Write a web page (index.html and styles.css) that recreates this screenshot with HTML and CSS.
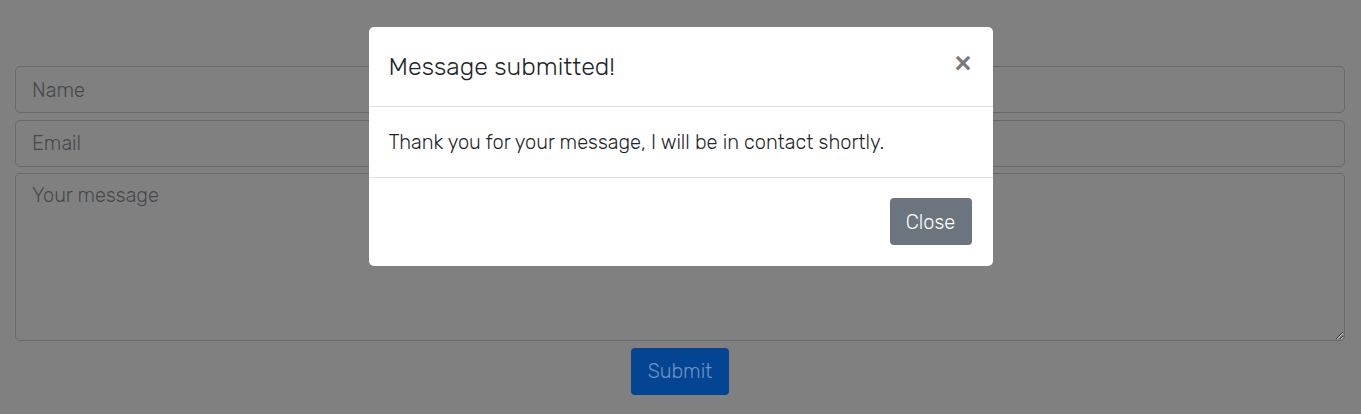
FILE: index.html
```html
<!DOCTYPE html>
<html lang="en">
<head>
<meta charset="utf-8">
<title>Contact</title>
<link rel="stylesheet" href="styles.css">
</head>
<body>
<main class="page">
  <form class="contact-form">
    <input class="field" type="text" placeholder="Name">
    <input class="field" type="email" placeholder="Email">
    <textarea class="field field-area" placeholder="Your message"></textarea>
    <div class="actions">
      <button type="button" class="btn btn-submit">Submit</button>
    </div>
  </form>
</main>
<div class="backdrop">
  <div class="modal">
    <div class="modal-header">
      <h5 class="modal-title">Message submitted!</h5>
      <span class="modal-close">&times;</span>
    </div>
    <div class="modal-body">Thank you for your message, I will be in contact shortly.</div>
    <div class="modal-footer">
      <button type="button" class="btn btn-close">Close</button>
    </div>
  </div>
</div>
</body>
</html>
```
FILE: styles.css
```css
* { box-sizing: border-box; }
html, body { margin: 0; height: 100%; }
body {
  background: #808080;
  font-family: Rubik, Roboto, "Noto Sans", sans-serif;
  font-weight: 300;
  overflow: hidden;
}
.page {
  padding: 66px 16px 0 15px;
}
.contact-form {
  display: flex;
  flex-direction: column;
  gap: 6.5px;
}
.field {
  display: block;
  width: 100%;
  height: 47px;
  padding: 7px 16px;
  font: inherit;
  font-size: 20px;
  color: #404246;
  background: #808080;
  border: 1px solid #67696c;
  border-radius: 5px;
  outline: none;
}
.field::placeholder { color: #46484c; opacity: 1; }
.field-area {
  height: 168px;
  resize: vertical;
  padding-top: 9px;
}
.actions {
  display: flex;
  justify-content: center;
}
.btn {
  font: inherit;
  font-weight: 300;
  font-size: 20px;
  line-height: 30px;
  padding: 7px 15px;
  border: 1px solid transparent;
  border-radius: 4px;
  cursor: pointer;
}
.btn-submit {
  width: 98px;
  height: 47px;
  background: #034592;
  color: #7394c2;
}
.backdrop {
  position: fixed;
  inset: 0;
  display: flex;
  justify-content: center;
  align-items: flex-start;
  padding-top: 27px;
}
.modal {
  width: 624px;
  background: #fff;
  border-radius: 5px;
  color: #212529;
}
.modal-header {
  display: flex;
  align-items: center;
  justify-content: space-between;
  height: 80px;
  padding: 0 21px 0 20px;
  border-bottom: 1px solid #dee2e6;
}
.modal-title {
  margin: 0;
  font-size: 25px;
  font-weight: 300;
  color: #212529;
}
.modal-close {
  font-size: 29px;
  font-weight: 700;
  color: #7a7a7a;
  line-height: 1;
  margin-top: -6px;
  font-family: Arial, "Liberation Sans", sans-serif;
}
.modal-body {
  height: 71px;
  padding: 20px;
  font-size: 20px;
  line-height: 30px;
  border-bottom: 1px solid #dee2e6;
}
.modal-footer {
  display: flex;
  justify-content: flex-end;
  padding: 20px 21px 21px 20px;
}
.btn-close {
  width: 82px;
  height: 47px;
  background: #6c757d;
  color: #fff;
}
```
